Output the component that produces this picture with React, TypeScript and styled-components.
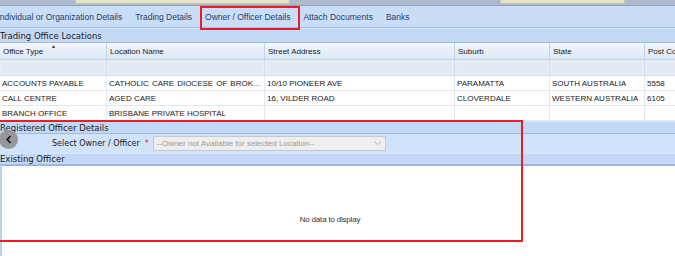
import React from "react";
import styled, { createGlobalStyle } from "styled-components";

const GlobalStyle = createGlobalStyle`
  html, body { margin: 0; padding: 0; background: #ffffff; overflow: hidden; }
  * { box-sizing: border-box; }
`;

const Page = styled.div`
  position: relative;
  width: 675px;
  height: 256px;
  overflow: hidden;
  display: flex;
  flex-direction: column;
  font-family: "Liberation Sans", Arial, sans-serif;
`;

const TopStrip = styled.div`
  height: 6px;
  flex: none;
  background: #aebbcd;
  border-bottom: 1px solid #8fa2bb;
  display: flex;
`;

const StripBox = styled.div<{ $left: number; $width: number }>`
  margin-left: ${(p) => p.$left}px;
  width: ${(p) => p.$width}px;
  height: 4px;
  background: #e4e2cb;
  border: 1px solid #c9c6a8;
  border-top: none;
`;

const TabBar = styled.div`
  height: 22px;
  flex: none;
  background: #c9ddf7;
  border-bottom: 1px solid #a6c1e5;
  display: flex;
  align-items: center;
  margin-left: -9px;
`;

const Tab = styled.div`
  padding: 0 6.5px;
  font-size: 8.5px;
  color: #1f3f6b;
  white-space: nowrap;
`;

const SectionHeader = styled.div<{ $h: number }>`
  height: ${(p) => p.$h}px;
  flex: none;
  background: #c2d8f5;
  border-top: 1px solid #d8e7fa;
  border-bottom: 1px solid #9fbbe0;
  display: flex;
  align-items: center;
  font-family: "DejaVu Sans", Verdana, sans-serif;
  font-size: 8.5px;
  color: #222;
  white-space: nowrap;
`;

const Grid = styled.div`
  flex: none;
  display: grid;
  grid-template-columns: 107px 158px 190px 95px 95px 90px;
  width: 735px;
`;

const HeadCell = styled.div`
  position: relative;
  height: 17px;
  display: flex;
  align-items: center;
  padding-left: 3px;
  font-size: 8px;
  color: #222;
  background: linear-gradient(#f1f6fd, #dde8f6);
  border-right: 1px solid #c3d3e8;
  border-bottom: 1px solid #c3d3e8;
  white-space: nowrap;
`;

const SortArrow = styled.span`
  position: absolute;
  left: 51px;
  top: 0px;
  font-size: 5px;
  color: #333;
`;

const FilterCell = styled.div`
  height: 16px;
  background: #e7edf6;
  border-right: 1px solid #d4dfee;
  border-bottom: 1px solid #d4dfee;
  padding: 2px;
`;

const FilterInner = styled.div`
  height: 100%;
  background: #e3eaf4;
`;

const DataCell = styled.div<{ $spaced?: boolean }>`
  height: 15px;
  display: flex;
  align-items: center;
  padding: 1px 3px 0 2px;
  font-size: 8px;
  color: #222;
  background: #fff;
  border-right: 1px solid #e2e8f0;
  border-bottom: 1px solid #e2e8f0;
  white-space: nowrap;
  overflow: hidden;
  word-spacing: ${(p) => (p.$spaced ? "0.8px" : "0")};
`;

const Ellipsis = styled.span`
  overflow: hidden;
  text-overflow: ellipsis;
  white-space: nowrap;
`;

const SelectRow = styled.div`
  height: 19px;
  flex: none;
  background: #d0e3fb;
  display: flex;
  align-items: center;
  padding-left: 52px;
  font-family: "DejaVu Sans", Verdana, sans-serif;
  font-size: 8px;
  color: #222;
`;

const Required = styled.span`
  color: #e0262a;
  margin-left: 5px;
  margin-right: 4px;
`;

const SelectBox = styled.div`
  width: 233px;
  height: 15px;
  background: #eeeeee;
  border: 1px solid #c9c9c9;
  display: flex;
  align-items: center;
  justify-content: space-between;
  padding: 0 4px 0 3px;
  font-family: "Liberation Sans", Arial, sans-serif;
  font-size: 8px;
  color: #9a9a9a;
`;

const EmptyGrid = styled.div`
  flex: 1;
  background: #fff;
  border-left: 2px solid #b8cfee;
  border-top: 1px solid #96b4dc;
  display: flex;
  align-items: flex-start;
  padding-top: 49px;
`;

const EmptyText = styled.div`
  width: 656px;
  text-align: center;
  font-size: 8px;
  color: #333;
  letter-spacing: -0.2px;
`;

const BackButton = styled.div`
  position: absolute;
  left: -1px;
  top: 130px;
  width: 19px;
  height: 19px;
  border-radius: 50%;
  background: #96989c;
  display: flex;
  align-items: center;
  justify-content: center;
`;

const Highlight = styled.div<{ $x: number; $y: number; $w: number; $h: number }>`
  position: absolute;
  left: ${(p) => p.$x}px;
  top: ${(p) => p.$y}px;
  width: ${(p) => p.$w}px;
  height: ${(p) => p.$h}px;
  border: 2px solid #ec1c24;
  pointer-events: none;
`;

const columns = ["Office Type", "Location Name", "Street Address", "Suburb", "State", "Post Code"];

const rows = [
  ["ACCOUNTS PAYABLE", "CATHOLIC CARE DIOCESE OF BROKEN BAY", "10/10 PIONEER AVE", "PARAMATTA", "SOUTH AUSTRALIA", "5558"],
  ["CALL CENTRE", "AGED CARE", "16, VILDER ROAD", "CLOVERDALE", "WESTERN AUSTRALIA", "6105"],
  ["BRANCH OFFICE", "BRISBANE PRIVATE HOSPITAL", "", "", "", ""],
];

const tabs = ["Individual or Organization Details", "Trading Details", "Owner / Officer Details", "Attach Documents", "Banks"];

export default function App() {
  return (
    <>
      <GlobalStyle />
      <Page>
        <TopStrip>
          <StripBox $left={75} $width={215} />
          <StripBox $left={210} $width={125} />
        </TopStrip>
        <TabBar>
          {tabs.map((t) => (
            <Tab key={t}>{t}</Tab>
          ))}
        </TabBar>
        <SectionHeader $h={15}>Trading Office Locations</SectionHeader>
        <Grid>
          {columns.map((c, i) => (
            <HeadCell key={c}>
              {c}
              {i === 0 && <SortArrow>▲</SortArrow>}
            </HeadCell>
          ))}
          {columns.map((c) => (
            <FilterCell key={"f" + c}>
              <FilterInner />
            </FilterCell>
          ))}
          {rows.map((r, ri) =>
            r.map((v, ci) => (
              <DataCell key={ri + "-" + ci} $spaced={ri === 0 && ci === 1}>
                <Ellipsis>{v}</Ellipsis>
              </DataCell>
            ))
          )}
        </Grid>
        <SectionHeader $h={13}>Registered Officer Details</SectionHeader>
        <SelectRow>
          Select Owner / Officer
          <Required>*</Required>
          <SelectBox>
            <span>--Owner not Available for selected Location--</span>
            <svg width="7" height="5" viewBox="0 0 7 5">
              <path d="M0.5 0.5 L3.5 3.8 L6.5 0.5" fill="none" stroke="#b0b0b0" strokeWidth="1" />
            </svg>
          </SelectBox>
        </SelectRow>
        <SectionHeader $h={12}>Existing Officer</SectionHeader>
        <EmptyGrid>
          <EmptyText>No data to display</EmptyText>
        </EmptyGrid>
        <BackButton>
          <svg width="8" height="9" viewBox="0 0 8 9">
            <path d="M5.5 1 L2.2 4.5 L5.5 8" fill="none" stroke="#1a1a1a" strokeWidth="1.8" />
          </svg>
        </BackButton>
        <Highlight $x={200} $y={6} $w={100} $h={24} />
        <Highlight $x={-2} $y={120} $w={525} $h={122} />
      </Page>
    </>
  );
}
